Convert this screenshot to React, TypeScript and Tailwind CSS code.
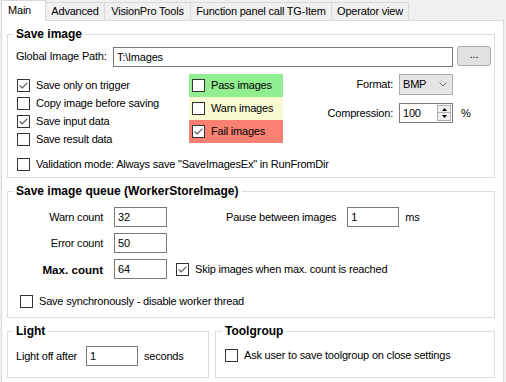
import React from 'react';
import clsx from 'clsx';

function CheckBox({ checked = false }: { checked?: boolean }) {
  return (
    <span className="flex h-[13px] w-[13px] shrink-0 items-center justify-center border border-[#333333] bg-white">
      {checked && (
        <svg width="11" height="11" viewBox="0 0 11 11">
          <path d="M1.6 5.4 L4.2 8 L9.4 2.6" fill="none" stroke="#555555" strokeWidth="1.1" />
        </svg>
      )}
    </span>
  );
}

function Check({ label, checked, className }: { label: string; checked?: boolean; className?: string }) {
  return (
    <div className={clsx('flex h-[18px] items-center gap-[6px]', className)}>
      <CheckBox checked={checked} />
      <span className="whitespace-nowrap">{label}</span>
    </div>
  );
}

function TextBox({ value, className }: { value: string; className?: string }) {
  return (
    <div className={clsx('flex h-[20px] items-center border border-[#7a7a7a] bg-white pl-[3px]', className)}>
      {value}
    </div>
  );
}

function Group({
  title,
  className,
  legendClass,
  children,
}: {
  title: string;
  className?: string;
  legendClass?: string;
  children: React.ReactNode;
}) {
  return (
    <fieldset className={clsx('border border-[#dcdcdc]', className)}>
      <legend className={clsx('ml-[5px] px-[3px] text-[12px] font-bold leading-[14px] tracking-normal', legendClass)}>
        {title}
      </legend>
      {children}
    </fieldset>
  );
}

const tabs = [
  { name: 'Advanced', w: 'w-[59px]' },
  { name: 'VisionPro Tools', w: 'w-[86px]' },
  { name: 'Function panel call TG-Item', w: 'w-[141px]' },
  { name: 'Operator view', w: 'w-[77px]' },
];

export default function App() {
  return (
    <div className="h-[382px] w-[506px] overflow-hidden bg-[#f0f0f0] font-['Liberation_Sans',Arial,sans-serif] text-[11px] leading-[13px] tracking-[-0.2px] text-black">
      {/* tab strip */}
      <div className="flex h-[20px] items-end pl-[1px]">
        <div className="relative z-10 -mb-px flex h-[21px] w-[45px] items-center border border-b-0 border-[#d9d9d9] bg-white pb-[2px] pl-[6px]">
          Main
        </div>
        {tabs.map((t) => (
          <div
            key={t.name}
            className={clsx(
              'flex h-[18px] items-center justify-center border-t border-r border-[#d9d9d9] bg-[#f0f0f0] whitespace-nowrap',
              t.w,
            )}
          >
            {t.name}
          </div>
        ))}
      </div>

      {/* tab page */}
      <div className="ml-[1px] h-[420px] w-[503px] border border-[#d9d9d9] bg-white pl-[5px]">
        <Group title="Save image" className="mt-[6px] h-[151px] w-[488px]">
          <div className="pl-[8px]">
            <div className="mt-[5px] flex h-[21px] items-start">
              <span className="w-[97px] self-center">Global Image Path:</span>
              <TextBox value="T:\Images" className="mt-[1px] w-[340px]" />
              <div className="ml-[4px] flex h-[20px] w-[34px] items-center justify-center rounded-[3px] border border-[#adadad] bg-[#e1e1e1] pb-[3px]">
                ...
              </div>
            </div>

            <div className="mt-[7px] flex">
              <div className="w-[173px] pt-[2px] pl-[1px]">
                <Check label="Save only on trigger" checked />
                <Check label="Copy image before saving" />
                <Check label="Save input data" checked />
                <Check label="Save result data" />
              </div>
              <div className="w-[94px]">
                <div className="flex h-[23px] items-center gap-[6px] bg-[#90ee90] pl-[3px]">
                  <CheckBox />
                  <span>Pass images</span>
                </div>
                <div className="flex h-[23px] items-center gap-[6px] bg-[#fafad2] pl-[3px]">
                  <CheckBox />
                  <span>Warn images</span>
                </div>
                <div className="flex h-[23px] items-center gap-[6px] bg-[#fa8072] pl-[3px]">
                  <CheckBox checked />
                  <span>Fail images</span>
                </div>
              </div>
              <div className="flex flex-col">
                <div className="flex items-center">
                  <span className="w-[110px] text-right">Format:</span>
                  <div className="ml-[6px] flex h-[21px] w-[54px] items-center justify-between border border-[#adadad] bg-[#e5e5e5] pr-[5px] pl-[3px]">
                    <span>BMP</span>
                    <svg width="8" height="5" viewBox="0 0 8 5">
                      <path d="M0.5 0.5 L4 4 L7.5 0.5" fill="none" stroke="#707070" strokeWidth="1" />
                    </svg>
                  </div>
                </div>
                <div className="mt-[8px] flex items-center">
                  <span className="w-[110px] text-right">Compression:</span>
                  <div className="ml-[6px] flex h-[20px] w-[54px] items-center justify-between border border-[#7a7a7a] bg-white pl-[3px]">
                    <span>100</span>
                    <div className="mr-[1px] flex h-[16px] w-[14px] flex-col">
                      <div className="flex h-[8px] items-center justify-center border border-[#adadad] bg-[#f0f0f0]">
                        <svg width="5" height="3" viewBox="0 0 5 3">
                          <path d="M0 3 L2.5 0 L5 3 Z" fill="#000" />
                        </svg>
                      </div>
                      <div className="flex h-[8px] items-center justify-center border border-t-0 border-[#adadad] bg-[#f0f0f0]">
                        <svg width="5" height="3" viewBox="0 0 5 3">
                          <path d="M0 0 L2.5 3 L5 0 Z" fill="#000" />
                        </svg>
                      </div>
                    </div>
                  </div>
                  <span className="ml-[8px]">%</span>
                </div>
              </div>
            </div>

            <Check label={'Validation mode: Always save "SaveImagesEx" in RunFromDir'} className="mt-[7px] pl-[1px]" />
          </div>
        </Group>

        <Group title="Save image queue (WorkerStoreImage)" className="mt-[6px] h-[134px] w-[488px]">
          <div className="pl-[8px]">
            <div className="mt-[9px] flex items-center">
              <span className="w-[87px] text-right">Warn count</span>
              <TextBox value="32" className="ml-[11px] w-[53px]" />
              <span className="ml-[59px]">Pause between images</span>
              <TextBox value="1" className="ml-[11px] w-[52px]" />
              <span className="ml-[6px]">ms</span>
            </div>
            <div className="mt-[6px] flex items-center">
              <span className="w-[87px] text-right">Error count</span>
              <TextBox value="50" className="ml-[11px] w-[53px]" />
            </div>
            <div className="mt-[6px] flex items-center">
              <span className="w-[87px] text-right text-[11.6px] font-bold tracking-normal">Max. count</span>
              <TextBox value="64" className="ml-[11px] w-[53px]" />
              <Check label="Skip images when max. count is reached" checked className="ml-[9px]" />
            </div>
            <Check label="Save synchronously - disable worker thread" className="mt-[13px] pl-[4px]" />
          </div>
        </Group>

        <div className="mt-[6px] flex gap-[6px]">
          <Group title="Light" className="h-[54px] w-[202px]">
            <div className="mt-[8px] flex items-center pl-[8px]">
              <span className="w-[70px]">Light off after</span>
              <TextBox value="1" className="w-[52px]" />
              <span className="ml-[6px]">seconds</span>
            </div>
          </Group>
          <Group title="Toolgroup" className="h-[54px] w-[280px]" legendClass="ml-[6px]">
            <Check label="Ask user to save toolgroup on close settings" className="mt-[8px] pl-[9px]" />
          </Group>
        </div>
      </div>
    </div>
  );
}
